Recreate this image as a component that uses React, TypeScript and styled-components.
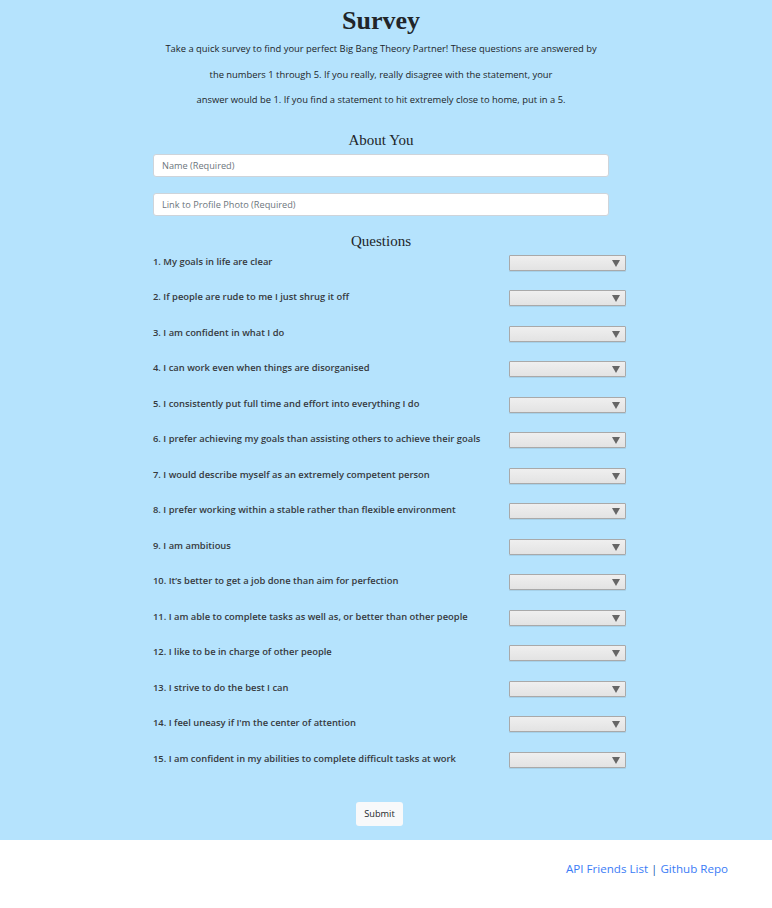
import React from "react";
import styled, { createGlobalStyle } from "styled-components";

const Global = createGlobalStyle`
  html, body { margin: 0; padding: 0; background: #ffffff; }
  body { font-family: "Open Sans", "Noto Sans", sans-serif; color: #212529; }
`;

const Main = styled.main`
  background: #b5e3fd;
  padding: 5px 0 14px;
`;

const Column = styled.div`
  margin-left: 153px;
  width: 456px;
  display: flex;
  flex-direction: column;
`;

const Title = styled.h1`
  margin: 0;
  font-family: "Liberation Serif", "Times New Roman", serif;
  font-weight: 700;
  font-size: 26px;
  line-height: 32px;
  text-align: center;
  color: #212529;
`;

const Intro = styled.p`
  margin: -1px 0 0;
  font-size: 9.4px;
  line-height: 25.5px;
  text-align: center;
  color: #212529;
`;

const IntroLine = styled.span`
  display: block;
`;

const SectionTitle = styled.h3<{ $top: number }>`
  margin: ${(p) => p.$top}px 0 0;
  font-family: "Liberation Serif", "Times New Roman", serif;
  font-weight: 400;
  font-size: 15px;
  line-height: 18px;
  text-align: center;
  color: #212529;
`;

const TextInput = styled.input<{ $top: number }>`
  box-sizing: border-box;
  width: 456px;
  height: 23px;
  margin-top: ${(p) => p.$top}px;
  border: 1px solid #ced4da;
  border-radius: 3px;
  background: #fff;
  padding: 0 8px;
  font-family: "Open Sans", "Noto Sans", sans-serif;
  font-size: 9.2px;
  &::placeholder { color: #6c757d; }
`;

const QuestionList = styled.div`
  width: 473px;
  margin-top: 5px;
  display: flex;
  flex-direction: column;
  gap: 19.5px;
`;

const QuestionRow = styled.div`
  display: flex;
  justify-content: space-between;
  align-items: flex-start;
  height: 16px;
`;

const QuestionLabel = styled.label`
  font-size: 9.4px;
  font-weight: 600;
  line-height: 14px;
  color: #363a3e;
`;

const SelectWrap = styled.div`
  position: relative;
  width: 117px;
  height: 16px;
`;

const Select = styled.select`
  display: block;
  box-sizing: border-box;
  appearance: none;
  -webkit-appearance: none;
  width: 100%;
  height: 100%;
  border: 1px solid #a9a9a9;
  border-radius: 1px;
  background: linear-gradient(#efefef, #e3e3e3);
  box-shadow: 0 1px 0 rgba(0, 0, 0, 0.08);
  margin: 0;
`;

const Arrow = styled.span`
  position: absolute;
  right: 6px;
  top: 5px;
  width: 0;
  height: 0;
  border-left: 4px solid transparent;
  border-right: 4px solid transparent;
  border-top: 7px solid #666;
  pointer-events: none;
`;

const SubmitRow = styled.div`
  display: flex;
  justify-content: center;
  margin-top: 34px;
  padding-right: 3px;
`;

const SubmitButton = styled.button`
  width: 47px;
  height: 24px;
  border: none;
  border-radius: 3px;
  background: #f8f9fa;
  font-family: "Open Sans", "Noto Sans", sans-serif;
  font-size: 9.2px;
  color: #212529;
  padding: 0;
`;

const Footer = styled.footer`
  height: 68px;
  display: flex;
  justify-content: flex-end;
  align-items: flex-start;
  padding: 20px 44px 0 0;
  box-sizing: border-box;
  font-size: 11.6px;
  line-height: 17px;
`;

const Link = styled.a`
  color: #3b7cf6;
  text-decoration: none;
`;

const Sep = styled.span`
  color: #1f5fb8;
  margin: 0 3px;
`;

const questions = [
  "My goals in life are clear",
  "If people are rude to me I just shrug it off",
  "I am confident in what I do",
  "I can work even when things are disorganised",
  "I consistently put full time and effort into everything I do",
  "I prefer achieving my goals than assisting others to achieve their goals",
  "I would describe myself as an extremely competent person",
  "I prefer working within a stable rather than flexible environment",
  "I am ambitious",
  "It\u2019s better to get a job done than aim for perfection",
  "I am able to complete tasks as well as, or better than other people",
  "I like to be in charge of other people",
  "I strive to do the best I can",
  "I feel uneasy if I'm the center of attention",
  "I am confident in my abilities to complete difficult tasks at work",
];

export default function App() {
  return (
    <>
      <Global />
      <Main>
        <Column>
          <Title>Survey</Title>
          <Intro>
            <IntroLine>
              Take a quick survey to find your perfect Big Bang Theory Partner! These questions are answered by
            </IntroLine>
            <IntroLine>
              the numbers 1 through 5. If you really, really disagree with the statement, your
            </IntroLine>
            <IntroLine>
              answer would be 1. If you find a statement to hit extremely close to home, put in a 5.
            </IntroLine>
          </Intro>
          <SectionTitle $top={18}>About You</SectionTitle>
          <TextInput $top={5} placeholder="Name (Required)" />
          <TextInput $top={16} placeholder="Link to Profile Photo (Required)" />
          <SectionTitle $top={16}>Questions</SectionTitle>
          <QuestionList>
            {questions.map((q, i) => (
              <QuestionRow key={i}>
                <QuestionLabel>{`${i + 1}. ${q}`}</QuestionLabel>
                <SelectWrap>
                  <Select defaultValue="">
                    <option value=""></option>
                    <option>1</option>
                    <option>2</option>
                    <option>3</option>
                    <option>4</option>
                    <option>5</option>
                  </Select>
                  <Arrow />
                </SelectWrap>
              </QuestionRow>
            ))}
          </QuestionList>
          <SubmitRow>
            <SubmitButton>Submit</SubmitButton>
          </SubmitRow>
        </Column>
      </Main>
      <Footer>
        <Link href="#">API Friends List</Link>
        <Sep>|</Sep>
        <Link href="#">Github Repo</Link>
      </Footer>
    </>
  );
}
